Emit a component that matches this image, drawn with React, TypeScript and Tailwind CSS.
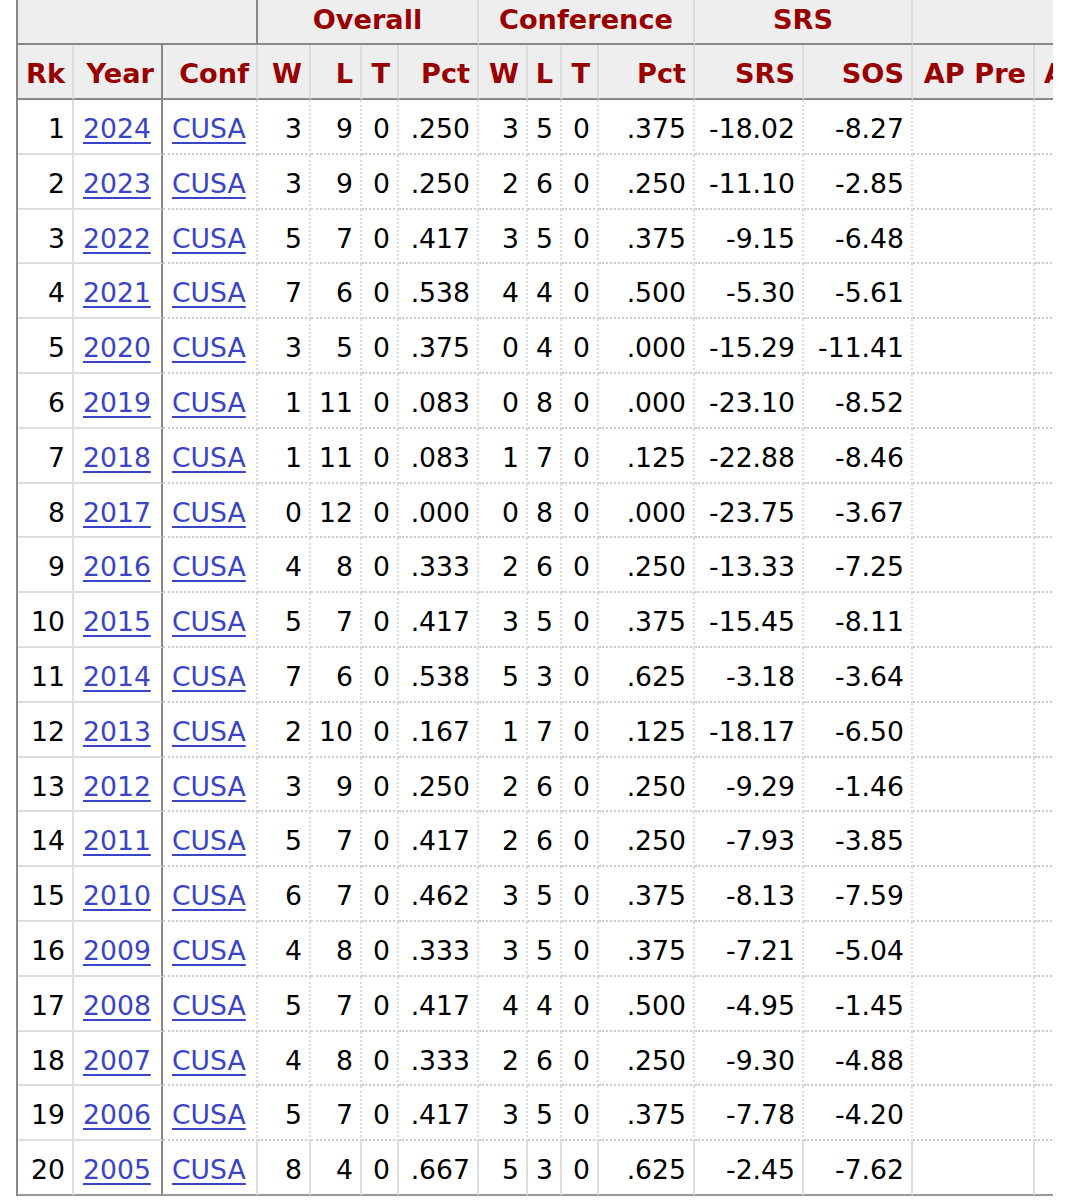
import React from "react";

type Row = [number, string, number, number, number, string, number, number, number, string, string, string];

const rows: Row[] = [
  [1, "2024", 3, 9, 0, ".250", 3, 5, 0, ".375", "-18.02", "-8.27"],
  [2, "2023", 3, 9, 0, ".250", 2, 6, 0, ".250", "-11.10", "-2.85"],
  [3, "2022", 5, 7, 0, ".417", 3, 5, 0, ".375", "-9.15", "-6.48"],
  [4, "2021", 7, 6, 0, ".538", 4, 4, 0, ".500", "-5.30", "-5.61"],
  [5, "2020", 3, 5, 0, ".375", 0, 4, 0, ".000", "-15.29", "-11.41"],
  [6, "2019", 1, 11, 0, ".083", 0, 8, 0, ".000", "-23.10", "-8.52"],
  [7, "2018", 1, 11, 0, ".083", 1, 7, 0, ".125", "-22.88", "-8.46"],
  [8, "2017", 0, 12, 0, ".000", 0, 8, 0, ".000", "-23.75", "-3.67"],
  [9, "2016", 4, 8, 0, ".333", 2, 6, 0, ".250", "-13.33", "-7.25"],
  [10, "2015", 5, 7, 0, ".417", 3, 5, 0, ".375", "-15.45", "-8.11"],
  [11, "2014", 7, 6, 0, ".538", 5, 3, 0, ".625", "-3.18", "-3.64"],
  [12, "2013", 2, 10, 0, ".167", 1, 7, 0, ".125", "-18.17", "-6.50"],
  [13, "2012", 3, 9, 0, ".250", 2, 6, 0, ".250", "-9.29", "-1.46"],
  [14, "2011", 5, 7, 0, ".417", 2, 6, 0, ".250", "-7.93", "-3.85"],
  [15, "2010", 6, 7, 0, ".462", 3, 5, 0, ".375", "-8.13", "-7.59"],
  [16, "2009", 4, 8, 0, ".333", 3, 5, 0, ".375", "-7.21", "-5.04"],
  [17, "2008", 5, 7, 0, ".417", 4, 4, 0, ".500", "-4.95", "-1.45"],
  [18, "2007", 4, 8, 0, ".333", 2, 6, 0, ".250", "-9.30", "-4.88"],
  [19, "2006", 5, 7, 0, ".417", 3, 5, 0, ".375", "-7.78", "-4.20"],
  [20, "2005", 8, 4, 0, ".667", 5, 3, 0, ".625", "-2.45", "-7.62"],
];

const headers = ["Rk", "Year", "Conf", "W", "L", "T", "Pct", "W", "L", "T", "Pct", "SRS", "SOS", "AP Pre", "AP Post"];

function rightBorder(i: number) {
  return i === 1 ? "border-r-2 border-r-[#888]" : "border-r-2 border-r-[#ddd]";
}

export default function App() {
  return (
    <div
      className="w-[1071px] h-[1200px] overflow-hidden bg-white"
      style={{ fontFamily: '"DejaVu Sans", Verdana, sans-serif' }}
    >
      <div className="ml-[16px] w-[1037px] overflow-hidden border-l-2 border-l-[#888]">
        <div className="grid w-max grid-cols-[56px_89px_95px_53px_51px_37px_80px_49px_34px_37px_96px_109px_109px_122px_140px] text-[26.67px] leading-none">
          {/* over header */}
          <div className="col-span-3 h-[45px] bg-[#eee] border-r-2 border-r-[#888] border-b-2 border-b-[#888]" />
          <div className="col-span-4 h-[45px] bg-[#eee] border-r-2 border-r-[#ddd] border-b-2 border-b-[#888] flex items-center justify-center pb-[4px] font-bold text-[#990000] text-[27.2px]">
            Overall
          </div>
          <div className="col-span-4 h-[45px] bg-[#eee] border-r-2 border-r-[#ddd] border-b-2 border-b-[#888] flex items-center justify-center pb-[4px] font-bold text-[#990000] text-[27.2px]">
            Conference
          </div>
          <div className="col-span-2 h-[45px] bg-[#eee] border-r-2 border-r-[#ddd] border-b-2 border-b-[#888] flex items-center justify-center pb-[4px] font-bold text-[#990000] text-[27.2px]">
            SRS
          </div>
          <div className="col-span-2 h-[45px] bg-[#eee] border-b-2 border-b-[#888]" />

          {/* header row */}
          {headers.map((h, i) => (
            <div
              key={"h" + i}
              className={
                "h-[55px] pt-[4px] bg-[#eee] border-b-2 border-b-[#888] flex items-center font-bold text-[#990000] whitespace-nowrap text-[27.2px] " +
                rightBorder(i) +
                (i === 14 ? " justify-start pl-[9px]" : " justify-end pr-[7px]")
              }
            >
              {h}
            </div>
          ))}

          {/* data rows */}
          {rows.map((r, ri) => {
            const last = ri === rows.length - 1;
            const cells: React.ReactNode[] = [];
            const vals: (string | number)[] = [r[0], r[1], "CUSA", r[2], r[3], r[4], r[5], r[6], r[7], r[8], r[9], r[10], r[11], "", ""];
            vals.forEach((v, i) => {
              const solid = i < 2;
              const bottom = last
                ? "border-b-2 border-b-[#999]"
                : solid
                ? "border-b-2 border-b-[#ddd]"
                : "border-b-2 border-dotted border-b-[#ccc]";
              const isLink = i === 1 || i === 2;
              cells.push(
                <div
                  key={ri + "-" + i}
                  className={
                    "h-[54.8px] pt-[6px] bg-white flex items-center whitespace-nowrap text-black " +
                    rightBorder(i) +
                    " " +
                    bottom +
                    (isLink ? " justify-start pl-[9px]" : " justify-end pr-[7px]")
                  }
                >
                  {isLink ? (
                    <a href="#" className="text-[#3a44c6] underline decoration-[2px] underline-offset-[4px]">
                      {v}
                    </a>
                  ) : (
                    v
                  )}
                </div>
              );
            });
            return cells;
          })}
        </div>
      </div>
    </div>
  );
}
